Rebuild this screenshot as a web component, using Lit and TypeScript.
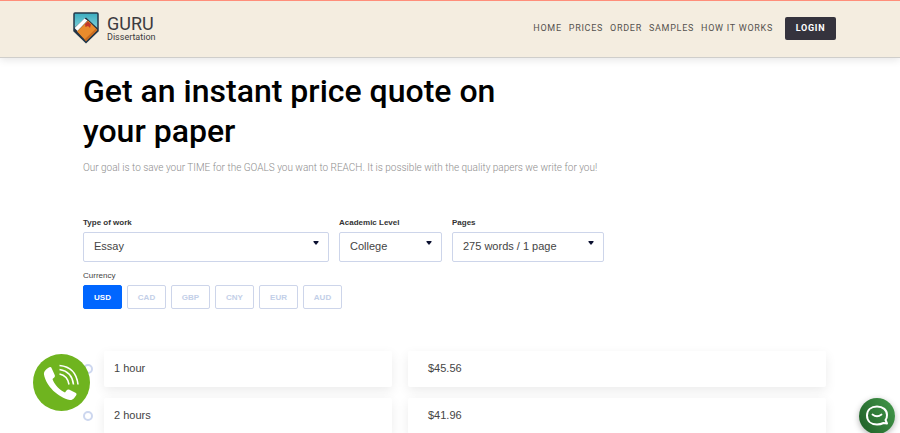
import { LitElement, html, css } from "lit";
import { customElement, property, state } from "lit/decorators.js";

const sans = css`"Liberation Sans", Arial, sans-serif`;

@customElement("site-header")
class SiteHeader extends LitElement {
  static styles = css`
    :host { display: block; }
    header {
      display: flex;
      align-items: center;
      justify-content: space-between;
      box-sizing: border-box;
      height: 58px;
      padding: 0 64px 2px 73px;
      background: #f4ede0;
      border-top: 1px solid #ff8e7a;
      border-bottom: 1px solid #cfcecb;
      box-shadow: 0 2px 8px rgba(0, 0, 0, 0.1);
      font-family: Roboto, sans-serif;
    }
    .logo { display: flex; align-items: center; gap: 8px; text-decoration: none; color: #3c3b3f; }
    .logo svg { width: 26px; height: 32px; }
    .name { display: flex; flex-direction: column; }
    .big { font-size: 18px; line-height: 18px; }
    .small { font-size: 9px; line-height: 8px; }
    nav { display: flex; align-items: center; gap: 7px; }
    nav a { font-size: 9px; line-height: 12px; letter-spacing: 0.08em; color: #55524f; text-decoration: none; white-space: nowrap; }
    button {
      margin-left: 5px;
      width: 51px;
      height: 23px;
      padding: 0;
      border: 0;
      border-radius: 2px;
      background: #35333d;
      color: #fff;
      font: 700 9px Roboto, sans-serif;
      letter-spacing: 0.08em;
    }
  `;
  render() {
    return html`<header>
      <a class="logo" href="#" aria-label="Guru Dissertation">
        <svg viewBox="0 0 26 32" aria-hidden="true">
          <defs>
            <linearGradient id="sky" x1="0" y1="0" x2="0" y2="1">
              <stop offset="0" stop-color="#35a9bd" /><stop offset="0.5" stop-color="#7fd0d8" />
            </linearGradient>
            <clipPath id="shield"><path d="M1 2Q1 1 2 1H24Q25 1 25 2V19L13 30.500L1 19Z" /></clipPath>
          </defs>
          <g clip-path="url(#shield)">
            <path d="M0 0H26V32H0Z" fill="url(#sky)" />
            <path d="M0 17L13 5.500L26 17.500V32H0Z" fill="#26303f" />
            <path d="M1.500 16L11.500 6.500L14.500 8.500L4.500 19Z" fill="#fff" />
            <path d="M4 19.500L15 8.500L24.500 18L13 29Z" fill="#e98b2c" />
            <path d="M12 12L15 9.500L18 12.500L17 16L15 14L12.500 15Z" fill="#c2372b" />
            <path d="M11.500 27.500L22.500 17L24.500 18L13 30Z" fill="#c96c20" />
          </g>
          <path d="M1 2Q1 1 2 1H24Q25 1 25 2V19L13 30.500L1 19Z" fill="none" stroke="#23384a" stroke-width="1.500" />
        </svg>
        <span class="name"><span class="big">GURU</span><span class="small">Dissertation</span></span>
      </a>
      <nav>
        ${["HOME", "PRICES", "ORDER", "SAMPLES", "HOW IT WORKS"].map((t) => html`<a href="#">${t}</a>`)}
        <button type="button">LOGIN</button>
      </nav>
    </header>`;
  }
}

@customElement("select-field")
class SelectField extends LitElement {
  @property() label = "";
  @property({ type: Array }) options: string[] = [];
  static styles = css`
    :host { display: block; font-family: ${sans}; }
    label { display: block; font-size: 8px; line-height: 12px; font-weight: 700; color: #333; margin-bottom: 3px; }
    .box { position: relative; }
    select {
      appearance: none;
      display: block;
      width: 100%;
      height: 30px;
      padding: 0 20px 2px 10px;
      border: 1px solid #cdd5ea;
      border-radius: 2px;
      background: #fff;
      color: #444;
      font: 11px ${sans};
    }
    svg { position: absolute; right: 10px; top: 9px; width: 6px; height: 4px; pointer-events: none; }
  `;
  render() {
    return html`<label for="s">${this.label}</label>
      <div class="box">
        <select id="s">${this.options.map((o) => html`<option>${o}</option>`)}</select>
        <svg viewBox="0 0 6 4" aria-hidden="true"><path d="M0.500 0H5.500V1L3 4L0.500 1Z" fill="#0b1030" /></svg>
      </div>`;
  }
}

@customElement("app-root")
class AppRoot extends LitElement {
  @state() private currency = "USD";
  private rates = [["1 hour", "$45.56"], ["2 hours", "$41.96"]];

  static styles = css`
    :host { display: block; background: #fff; font-family: ${sans}; }
    main { padding: 13px 74px 0 83px; }
    h1 { margin: 0; max-width: 440px; font: 500 32px/40px Roboto, sans-serif; color: #000; }
    .lead { margin: 9px 0 0; font: 300 10px/16px Roboto, sans-serif; color: #8e8e8e; }
    .fields { display: grid; grid-template-columns: 246fr 103fr 152fr; gap: 10px; max-width: 521px; margin-top: 41px; }
    fieldset { margin: 8px 0 0; padding: 0; border: 0; }
    legend { padding: 0; font-size: 8px; line-height: 12px; color: #444; }
    .currencies { display: flex; gap: 5px; padding-top: 3px; }
    .currencies button {
      width: 39px;
      height: 24px;
      padding: 0;
      border: 1px solid #cdd5ea;
      border-radius: 2px;
      background: #fff;
      color: #c3cfe8;
      font: 700 8px ${sans};
    }
    .currencies button[aria-pressed="true"] { background: #0066ff; border-color: #0066ff; color: #fff; }
    table { width: 100%; margin-top: 42px; border-collapse: collapse; table-layout: fixed; }
    td { padding: 0 0 11px; }
    .pick { width: 21px; }
    .term { width: 304px; padding-right: 16px; box-sizing: border-box; }
    input {
      appearance: none;
      display: block;
      box-sizing: border-box;
      width: 10px;
      height: 10px;
      margin: 0;
      border: 2px solid #cdd7ef;
      border-radius: 50%;
      background: #fff;
    }
    .card {
      display: block;
      padding: 9px 10px 11px;
      border-radius: 2px;
      background: #fff;
      box-shadow: 0 4px 12px rgba(0, 0, 0, 0.08);
      font-size: 11px;
      line-height: 16px;
      color: #444;
    }
    .price { padding-left: 20px; }
    .call, .chat { position: fixed; padding: 0; border: 0; border-radius: 50%; }
    .call { left: 33px; bottom: 22px; width: 57px; height: 57px; background: #6fb41f; }
    .chat {
      right: 5px;
      bottom: -1px;
      width: 36px;
      height: 36px;
      background: linear-gradient(60deg, #1d5c26, #449a4b);
      box-shadow: 0 2px 6px rgba(0, 0, 0, 0.3);
    }
    .call svg, .chat svg { display: block; width: 100%; height: 100%; }
  `;

  render() {
    return html`
      <site-header></site-header>
      <main>
        <h1>Get an instant price quote on your paper</h1>
        <p class="lead">Our goal is to save your TIME for the GOALS you want to REACH. It is possible with the quality papers we write for you!</p>
        <div class="fields">
          <select-field label="Type of work" .options=${["Essay"]}></select-field>
          <select-field label="Academic Level" .options=${["College"]}></select-field>
          <select-field label="Pages" .options=${["275 words / 1 page"]}></select-field>
        </div>
        <fieldset>
          <legend>Currency</legend>
          <div class="currencies">
            ${["USD", "CAD", "GBP", "CNY", "EUR", "AUD"].map(
              (c) => html`<button type="button" aria-pressed=${c === this.currency} @click=${() => (this.currency = c)}>${c}</button>`
            )}
          </div>
        </fieldset>
        <table>
          <colgroup><col class="pick" /><col class="term" /><col /></colgroup>
          <tbody>
            ${this.rates.map(
              ([term, price], i) => html`<tr>
                <td><input type="radio" name="term" id="t${i}" /></td>
                <td class="term"><label class="card" for="t${i}">${term}</label></td>
                <td><span class="card price">${price}</span></td>
              </tr>`
            )}
          </tbody>
        </table>
      </main>
      <button class="call" type="button" aria-label="Call us">
        <svg viewBox="0 0 57 57" aria-hidden="true">
          <path d="M17 13C14 14.500 10.500 17 11 20.500C13 32 25 43.500 37 46C39.500 46.500 42.500 43 43.500 40.500Q43.800 39.500 42.500 38.700L36 35.500Q34.500 35 33.500 36.500L32 38.500C27 36.500 21 30 19.500 25L21.500 23.300Q22.500 22.300 21.500 20.500L18.300 13.500Q17.800 12.700 17 13Z" fill="#fff" />
          <path d="M26.500 20Q34.500 21.500 36 30.500M26.500 15.500Q39 17.500 40.500 30.500M26.500 11.500Q43 13 45 30.500" fill="none" stroke="#fff" stroke-width="1.600" />
        </svg>
      </button>
      <button class="chat" type="button" aria-label="Open chat">
        <svg viewBox="0 0 36 36" aria-hidden="true">
          <path d="M18 8.500C24 8.500 28 12 28 17C28 19 27.500 21 26.500 22L28 25.500L24.500 25C22.500 26 20.500 26.500 18 26.500C12 26.500 8 23 8 17.500S12 8.500 18 8.500Z" fill="none" stroke="#fff" stroke-width="2" stroke-linejoin="round" />
          <path d="M13.500 16.500Q18 20 22.500 16.500" fill="none" stroke="#fff" stroke-width="1.800" stroke-linecap="round" />
        </svg>
      </button>
    `;
  }
}
